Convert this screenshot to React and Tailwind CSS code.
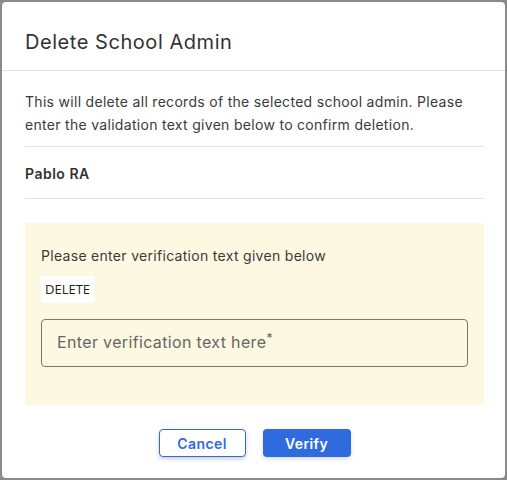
import { useState } from 'react';

const App = () => {
  const [text, setText] = useState('');

  return (
    <div className="w-[507px] h-[480px] bg-[#8a8a8a] p-[2px] overflow-hidden font-['Inter','Open_Sans',sans-serif]">
      <div className="bg-white rounded-[4px] h-full flex flex-col">
        <div className="px-[23px] pt-[26px] pb-[14px] border-b border-[#e2e2e2]">
          <h2 className="text-[20px] leading-[28px] tracking-[0.55px] text-[#333]">Delete School Admin</h2>
        </div>

        <div className="px-[23px] pt-[19px] pr-[21px]">
          <p className="text-[14px] leading-[23px] tracking-[0.3px] text-[#3a3a3a] pb-[10px] border-b border-[#e2e2e2]">
            This will delete all records of the selected school admin. Please enter the validation text given below to confirm deletion.
          </p>
          <p className="text-[14px] leading-[22px] tracking-[0.5px] font-semibold text-[#333] pt-[16px] pb-[13px] border-b border-[#e2e2e2]">
            Pablo RA
          </p>

          <div className="mt-[24px] bg-[#fdf8e1] px-4 pt-[23px] pb-[38px]">
            <p className="text-[14px] leading-[20px] tracking-[0.3px] text-[#3a3a3a]">Please enter verification text given below</p>
            <span className="inline-block mt-[10px] bg-white px-[4px] h-[27px] leading-[27px] text-[13px] text-[#222] font-['Open_Sans',sans-serif]">
              DELETE
            </span>
            <div className="mt-[16px] relative">
              <input
                type="text"
                value={text}
                onChange={(e) => setText(e.target.value)}
                className="w-full h-[48px] border border-[#777] rounded-[4px] bg-transparent px-[16px] text-[16px] text-[#333] outline-none"
              />
              {!text && (
                <span className="absolute left-[16px] top-[12px] text-[16px] leading-[22px] tracking-[0.35px] text-[#666] pointer-events-none">
                  Enter verification text here<sup className="text-[12px]">*</sup>
                </span>
              )}
            </div>
          </div>

          <div className="mt-[24px] flex justify-center gap-[17px]">
            <button className="w-[87px] h-[28px] border border-[#2f6bdf] rounded-[4px] bg-white text-[#2f6bdf] text-[14px] tracking-[0.4px] font-semibold shadow-[0_2px_4px_rgba(0,0,0,0.2)]">
              Cancel
            </button>
            <button className="w-[88px] h-[28px] rounded-[4px] bg-[#2f6bdf] text-white text-[14px] tracking-[0.4px] font-semibold shadow-[0_2px_4px_rgba(0,0,0,0.15)]">
              Verify
            </button>
          </div>
        </div>
      </div>
    </div>
  );
};

export default App;
